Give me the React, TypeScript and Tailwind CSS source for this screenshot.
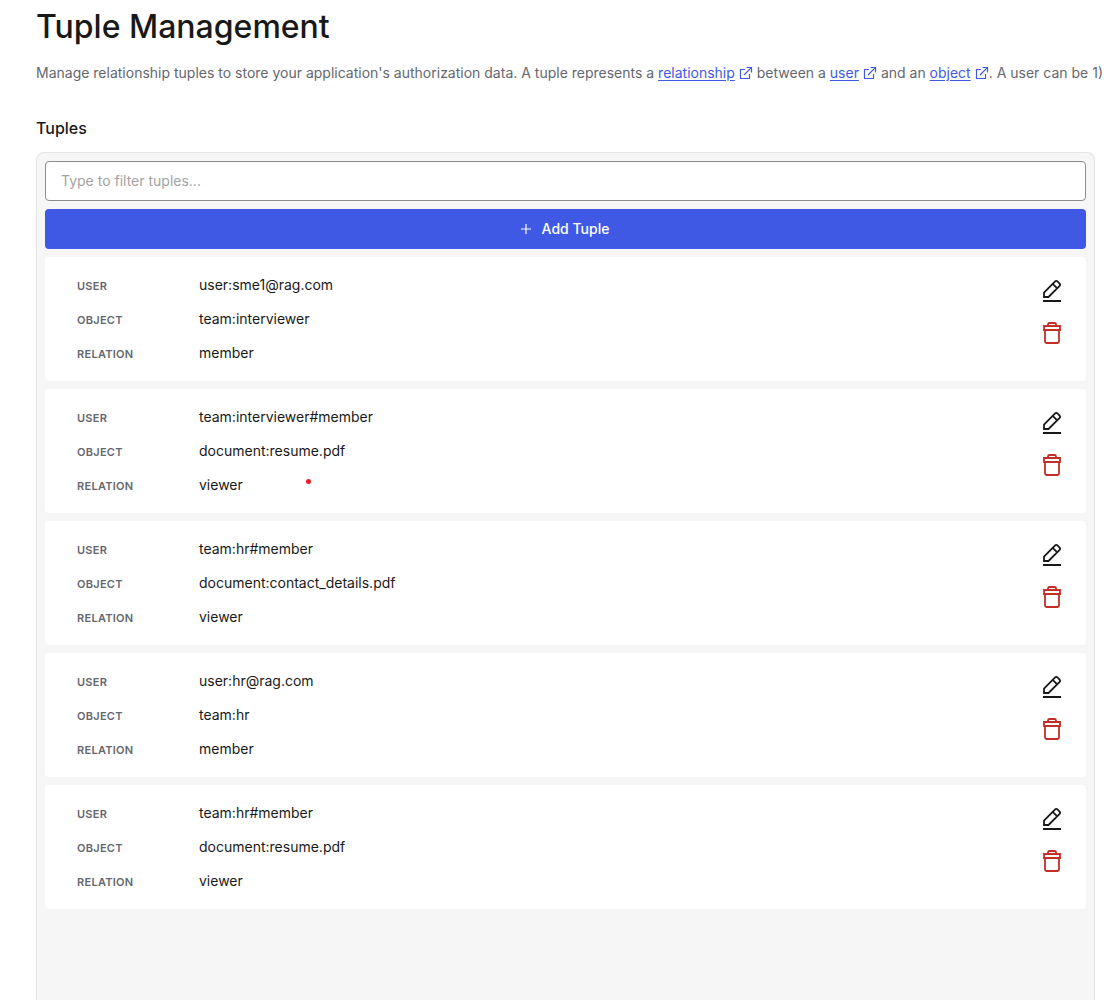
import React, { useState } from "react";

type Tuple = { user: string; object: string; relation: string; flagged?: boolean };

const TUPLES: Tuple[] = [
  { user: "user:sme1@rag.com", object: "team:interviewer", relation: "member" },
  { user: "team:interviewer#member", object: "document:resume.pdf", relation: "viewer", flagged: true },
  { user: "team:hr#member", object: "document:contact_details.pdf", relation: "viewer" },
  { user: "user:hr@rag.com", object: "team:hr", relation: "member" },
  { user: "team:hr#member", object: "document:resume.pdf", relation: "viewer" },
];

function PencilIcon() {
  return (
    <svg width="24" height="24" viewBox="0 0 24 24" fill="none" stroke="currentColor" strokeWidth="1.800" aria-hidden="true">
      <path d="M4 18V13.5L14.900 2.600a2 2 0 0 1 2.800 0L19.400 4.300a2 2 0 0 1 0 2.800L8.500 18Z" />
      <path d="M12.700 4.800l4.500 4.500" />
      <path d="M3 22H21" strokeWidth="2" />
    </svg>
  );
}

function TrashIcon() {
  return (
    <svg width="24" height="24" viewBox="0 0 24 24" fill="none" stroke="currentColor" strokeWidth="1.800" aria-hidden="true">
      <path d="M4 5H20V9H4Z" />
      <path d="M8 5V3.500A1.500 1.500 0 0 1 9.500 2H14.500A1.500 1.500 0 0 1 16 3.500V5" />
      <path d="M5 9V20.500A1.500 1.500 0 0 0 6.500 22H17.500A1.500 1.500 0 0 0 19 20.500V9" />
    </svg>
  );
}

function ExternalIcon() {
  return (
    <svg className="ml-1 inline-block align-[-2px]" width="14" height="14" viewBox="0 0 14 14" fill="none" stroke="currentColor" strokeWidth="1.200" aria-hidden="true">
      <path d="M6 3.500H1.500V12.500H10.500V8" />
      <path d="M7.500 1.500H12.500V6.500" />
      <path d="M12.300 1.700L5 9" />
    </svg>
  );
}

function DocLink({ children }: { children: string }) {
  return (
    <a href="#docs" className="text-[#3f59e4]">
      <span className="underline underline-offset-2">{children}</span>
      <ExternalIcon />
    </a>
  );
}

function Field({ label, value, flagged }: { label: string; value: string; flagged?: boolean }) {
  return (
    <div className="flex h-6 items-center">
      <dt className="w-[122px] shrink-0 pt-[3px] text-[11px] font-semibold tracking-wide text-[#65676e] uppercase">{label}</dt>
      <dd className="min-w-16">{value}</dd>
      {flagged && <dd className="mb-2 ml-[43px] size-[5px] rounded-full bg-[#ed1c24]" />}
    </div>
  );
}

export default function App() {
  const [query, setQuery] = useState("");
  const visible = TUPLES.filter((t) => `${t.user} ${t.object} ${t.relation}`.includes(query));

  return (
    <main className="flex min-h-screen flex-col overflow-x-hidden bg-white pr-[10px] pl-9 font-['Inter',sans-serif] text-sm text-[#191919]">
      <h1 className="pt-[5px] text-[32px] leading-11 font-medium">Tuple Management</h1>
      <p className="mt-3 leading-6 whitespace-nowrap text-[#65676e]">
        Manage relationship tuples to store your application's authorization data. A tuple represents a{" "}
        <DocLink>relationship</DocLink> between a <DocLink>user</DocLink> and an <DocLink>object</DocLink>. A user can
        be 1)
      </p>
      <h2 className="mt-[31px] text-base font-medium">Tuples</h2>
      <section className="mt-3 flex flex-1 flex-col gap-2 rounded-t-lg border border-b-0 border-[#e3e3e3] bg-[#f6f6f6] p-2">
        <input
          type="text"
          aria-label="Filter tuples"
          placeholder="Type to filter tuples..."
          value={query}
          onChange={(e) => setQuery(e.target.value)}
          className="h-10 w-full rounded border border-[#8c8c8c] bg-white px-[15px] pb-[2px] placeholder:text-[#a3a3a3]"
        />
        <button type="button" className="flex h-10 items-center justify-center gap-2 rounded bg-[#3f59e4] pr-1 font-medium text-white">
          <svg width="16" height="16" viewBox="0 0 16 16" fill="none" stroke="currentColor" strokeWidth="1.200" aria-hidden="true">
            <path d="M8 3V13M3 8H13" />
          </svg>
          Add Tuple
        </button>
        {visible.map((t, i) => (
          <article key={i} className="flex items-start justify-between rounded bg-white py-4 pr-[22px] pl-8">
            <dl className="flex flex-col gap-[10px]">
              <Field label="User" value={t.user} />
              <Field label="Object" value={t.object} />
              <Field label="Relation" value={t.relation} flagged={t.flagged} />
            </dl>
            <div className="flex flex-col gap-[18px] pt-[6px]">
              <button type="button" aria-label="Edit tuple">
                <PencilIcon />
              </button>
              <button type="button" aria-label="Delete tuple" className="text-[#c32f26]">
                <TrashIcon />
              </button>
            </div>
          </article>
        ))}
      </section>
    </main>
  );
}
